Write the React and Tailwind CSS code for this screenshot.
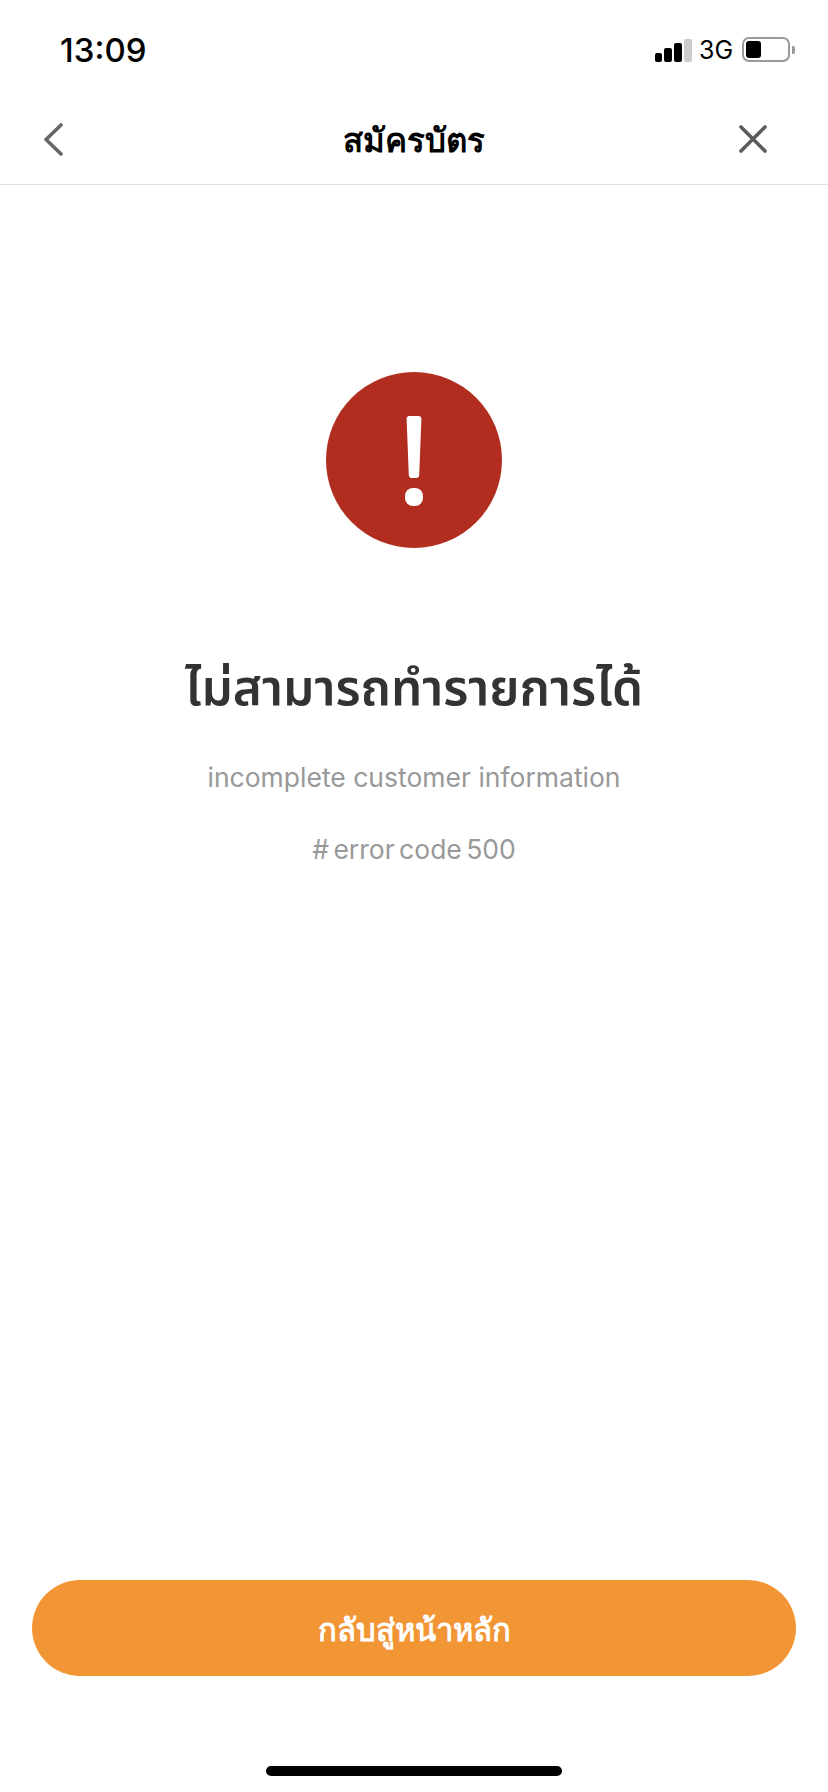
import React from 'react'

const StatusBar = () => (
  <div className="h-[100px] pl-[60px] pr-[33px] flex items-start justify-between">
    <span className="mt-[29px] text-[33px] leading-[42px] font-medium text-black">13:09</span>
    <div className="mt-[37px] flex items-center">
      <div className="flex items-end gap-[2px] h-[24px]">
        <span className="w-[7px] h-[9px] bg-black rounded-[2px]" />
        <span className="w-[8px] h-[14px] bg-black rounded-[2px]" />
        <span className="w-[8px] h-[19px] bg-black rounded-[2px]" />
        <span className="w-[8px] h-[23px] bg-[#cccccc] rounded-[2px]" />
      </div>
      <span className="ml-[7px] text-[25px] leading-[24px] text-black w-[34px]">3G</span>
      <div className="ml-[9px] w-[48px] h-[25px] border-[2px] border-[#999999] rounded-[7px] p-[2px]">
        <div className="w-[15px] h-full bg-black rounded-[3px]" />
      </div>
      <span className="ml-[2px] w-[3px] h-[8px] bg-[#999999] rounded-r-[2px]" />
    </div>
  </div>
)

const NavBar = () => (
  <div className="h-[85px] pl-[42px] pr-[60px] flex items-center justify-between border-b border-[#e0e0e0] relative">
    <svg width="22" height="34" viewBox="0 0 22 34" fill="none" className="mb-[7px]">
      <path d="M19 3L4 17.5L19 32" stroke="#666666" strokeWidth="3.6" strokeLinecap="round" strokeLinejoin="round" />
    </svg>
    <span className="absolute left-0 right-0 text-center text-[33px] font-bold text-black leading-[44px] pb-[5px]">สมัครบัตร</span>
    <svg width="30" height="30" viewBox="0 0 30 30" fill="none" className="mb-[7px]">
      <path d="M3 3L27 27M27 3L3 27" stroke="#5c5c5c" strokeWidth="3.6" strokeLinecap="round" />
    </svg>
  </div>
)

const ErrorIcon = () => (
  <div className="w-[176px] h-[176px] rounded-full bg-[#b12d20] flex items-center justify-center">
    <svg width="18" height="90" viewBox="0 0 18 90" fill="none" className="mt-[2px]">
      <path d="M1.6 3C1.5 1.4 2.6 0 4.2 0h9.6c1.6 0 2.7 1.4 2.6 3L14.2 59c-.1 1.6-1.1 3-2.7 3H6.5C4.9 62 3.9 60.6 3.8 59z" fill="#ffffff" />
      <rect x="0" y="72" width="18" height="18" rx="8" fill="#ffffff" />
    </svg>
  </div>
)

export default function App() {
  return (
    <div className="w-[828px] h-[1792px] bg-white flex flex-col font-['Inter','Noto_Sans',sans-serif]">
      <StatusBar />
      <NavBar />
      <div className="flex-1 flex flex-col items-center pt-[187px]">
        <ErrorIcon />
        <h1 className="mt-[110px] text-[49.5px] leading-[64px] font-semibold text-[#333333] font-['Noto_Sans_Thai','Inter',sans-serif]">ไม่สามารถทำรายการได้</h1>
        <p className="mt-[37px] text-[26.5px] leading-[36px] text-[#999999]">incomplete customer information</p>
        <p className="mt-[36px] text-[26.5px] leading-[36px] text-[#999999] [word-spacing:-3px]">{'# error code 500'}</p>
      </div>
      <div className="px-[32px]">
        <button className="w-full h-[96px] rounded-full bg-[#f29535] text-white text-[31px] font-semibold pt-[4px]">กลับสู่หน้าหลัก</button>
      </div>
      <div className="h-[116px] flex justify-center pt-[90px]">
        <div className="w-[296px] h-[10px] rounded-full bg-black" />
      </div>
    </div>
  )
}
